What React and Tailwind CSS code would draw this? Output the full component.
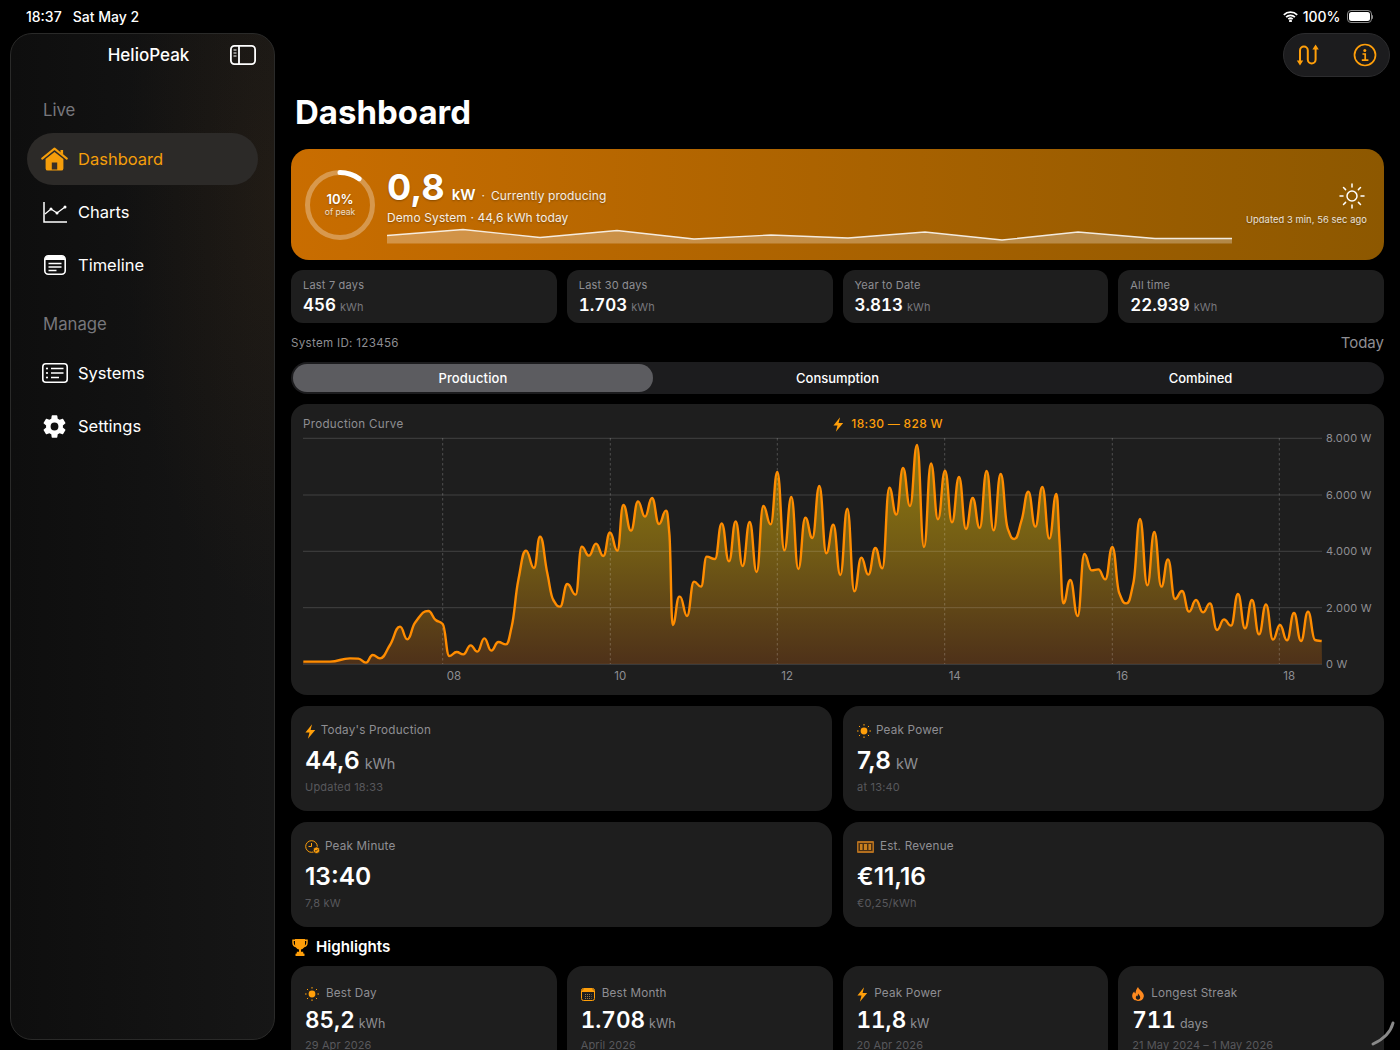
import { IoSettingsSharp } from 'react-icons/io5';

const ORANGE = '#ff9f0a';

// curve samples read off the picture, in 3x crops
const sampleA = [[40,785],[120,785],[180,775],[205,776],[228,788],[248,765],[270,775],[300,735],[330,680],[352,718],[375,668],[415,633],[437,660],[458,672],[478,768],[500,756],[520,763],[542,736],[562,755],[583,715],[604,752],[625,726],[648,733],[665,680],[685,540],[708,452],[732,504],[750,410],[772,520],[790,600],[810,620],[832,552],[857,584],[875,440],[897,467],[918,431],[940,468],[960,397],[982,452],[1000,315],[1023,392],[1044,304],[1065,350],[1086,294],[1107,372],[1128,332],[1138,400],[1148,675],[1168,590]];
const sampleB = [[0,590],[21,648],[42,545],[63,560],[80,470],[105,477],[125,370],[147,484],[167,364],[188,498],[209,366],[230,516],[250,318],[272,373],[292,216],[313,451],[334,291],[355,507],[376,353],[397,414],[418,258],[439,460],[460,374],[481,525],[502,326],[523,574],[544,473],[565,524],[586,444],[607,505],[628,263],[649,344],[669,204],[690,318],[711,135],[732,441],[753,190],[774,358],[795,212],[816,367],[837,231],[858,387],[878,294],[899,384],[920,213],[941,391],[962,222],[983,385],[1003,417],[1025,360],[1045,275],[1066,380],[1087,261],[1108,416],[1129,282],[1139,430],[1150,610],[1171,540]];
const sampleC = [[143,648],[163,462],[185,511],[205,508],[226,538],[247,441],[268,580],[289,610],[310,550],[330,357],[352,556],[373,396],[394,560],[414,478],[435,597],[456,573],[477,635],[498,600],[519,637],[540,610],[561,690],[582,658],[603,677],[624,582],[645,685],[666,600],[687,703],[708,613],[729,719],[750,675],[771,721],[792,639],[813,723],[834,635],[855,720],[875,723]];

const curve = [
  ...sampleA.map(([x, y]) => [290 + x / 3, 400 + y / 3]),
  ...sampleB.map(([x, y]) => [680 + x / 3, 400 + y / 3]),
  ...sampleC.map(([x, y]) => [1030 + x / 3, 400 + y / 3]),
];

// monotone cubic so the peaks stay round and never overshoot
function smoothPath(pts) {
  const n = pts.length;
  const slopes = [];
  for (let i = 0; i < n - 1; i++) slopes.push((pts[i + 1][1] - pts[i][1]) / (pts[i + 1][0] - pts[i][0]));
  const tangents = pts.map((_, i) => {
    if (i === 0) return slopes[0];
    if (i === n - 1) return slopes[n - 2];
    if (slopes[i - 1] * slopes[i] <= 0) return 0;
    return (2 * slopes[i - 1] * slopes[i]) / (slopes[i - 1] + slopes[i]);
  });
  let d = `M${pts[0][0]} ${pts[0][1]}`;
  for (let i = 0; i < n - 1; i++) {
    const h = (pts[i + 1][0] - pts[i][0]) * 0.48;
    d += `C${pts[i][0] + h} ${pts[i][1] + tangents[i] * h} ${pts[i + 1][0] - h} ${pts[i + 1][1] - tangents[i + 1] * h} ${pts[i + 1][0]} ${pts[i + 1][1]}`;
  }
  return d;
}

const linePath = smoothPath(curve);
const areaPath = `${linePath}L1322 664L303 664Z`;

const spark = [[387,235.5],[463,229.5],[540,237.5],[617,230.5],[694,239],[771,235],[848,238],[925,232],[1002,240],[1078,232],[1155,238.5],[1232,238.5]];
const sparkLine = spark.map((p, i) => `${i ? 'L' : 'M'}${p[0]} ${p[1]}`).join('');

function HouseIcon() {
  return (
    <svg width="27" height="24" viewBox="0 0 27 24" fill="none">
      <path d="M19.5 3h2.6v4.6l-2.6-2.2z" fill="#f59e0b" />
      <path d="M1.2 11.6 13.5 1.6l12.3 10" stroke="#f59e0b" strokeWidth="2" strokeLinecap="round" strokeLinejoin="round" />
      <path d="M4.6 12 13.5 4.9l8.9 7.1v9.4a2.2 2.2 0 0 1-2.2 2.2H6.8a2.2 2.2 0 0 1-2.2-2.2z" fill="#f59e0b" />
      <rect x="10.8" y="15.5" width="5.4" height="7" fill="#3a3026" />
    </svg>
  );
}

function ChartIcon() {
  return (
    <svg width="24" height="21" viewBox="0 0 24 21" fill="none">
      <path d="M1 0v20h23" stroke="white" strokeWidth="1.5" />
      <path d="M2 12l6-5 6 4 8-6" stroke="white" strokeWidth="1.3" />
      <circle cx="8" cy="7" r="1.5" fill="white" />
      <circle cx="14" cy="11" r="1.5" fill="white" />
      <circle cx="22" cy="5" r="1.5" fill="white" />
    </svg>
  );
}

function TimelineIcon() {
  return (
    <svg width="22" height="20" viewBox="0 0 22 20" fill="none">
      <rect x="0.8" y="0.8" width="20.4" height="18.4" rx="3.5" stroke="white" strokeWidth="1.6" />
      <path d="M1 4.5a3.5 3.5 0 0 1 3.5-3.5h13a3.5 3.5 0 0 1 3.5 3.5V5H1z" fill="white" />
      <path d="M4.5 8.5h13M4.5 12h13M4.5 15.5h8" stroke="white" strokeWidth="1.3" />
    </svg>
  );
}

function SystemsIcon() {
  return (
    <svg width="26" height="20" viewBox="0 0 26 20" fill="none">
      <rect x="0.8" y="0.8" width="24.4" height="18.4" rx="3" stroke="white" strokeWidth="1.6" />
      <path d="M9 5.5h12.5M9 10h12.5M9 14.5h8" stroke="white" strokeWidth="1.3" />
      <circle cx="5" cy="5.5" r="1.1" fill="white" />
      <circle cx="5" cy="10" r="1.1" fill="white" />
      <circle cx="5" cy="14.5" r="1.1" fill="white" />
    </svg>
  );
}

function SidebarIcon() {
  return (
    <svg width="26" height="20" viewBox="0 0 26 20" fill="none">
      <rect x="0.9" y="0.9" width="24.2" height="18.2" rx="3.5" stroke="white" strokeWidth="1.8" />
      <path d="M9 1v18" stroke="white" strokeWidth="1.8" />
      <path d="M3.5 5h3M3.5 8h3M3.5 11h3" stroke="white" strokeWidth="1.2" />
    </svg>
  );
}

function RouteIcon() {
  return (
    <svg width="24" height="24" viewBox="0 0 24 24" fill="none">
      <path d="M4 19V7.5a3.9 3.9 0 0 1 7.8 0v9a3.9 3.9 0 0 0 7.8 0V5" stroke={ORANGE} strokeWidth="2" />
      <path d="M0.8 17.5h6.4L4 22.5zM16.4 6.5h6.4L19.6 1.5z" fill={ORANGE} />
    </svg>
  );
}

function InfoIcon() {
  return (
    <svg width="24" height="24" viewBox="0 0 24 24" fill="none">
      <circle cx="12" cy="12" r="10.5" stroke={ORANGE} strokeWidth="1.7" />
      <circle cx="11.8" cy="7.5" r="1.5" fill={ORANGE} />
      <path d="M9.5 11h2.7v6.2M8.8 17.2h6.6" stroke={ORANGE} strokeWidth="1.7" />
    </svg>
  );
}

function BoltIcon({ height = 15 }) {
  return (
    <svg width={(height * 10) / 14} height={height} viewBox="2 0 10 14" fill={ORANGE}>
      <path d="M8.6 0.3 2.4 7.9h3.8l-1.5 5.8 6.9-8.1H7.2z" />
    </svg>
  );
}

function SmallSun() {
  return (
    <svg width="14" height="14" viewBox="0 0 14 14" fill={ORANGE} stroke={ORANGE}>
      <circle cx="7" cy="7" r="3.4" stroke="none" />
      <path d="M7 0v1.6M7 12.4V14M0 7h1.6M12.4 7H14M2 2l1.1 1.1M10.9 10.9 12 12M2 12l1.1-1.1M10.9 3.1 12 2" strokeWidth="1" />
    </svg>
  );
}

function HeroSun() {
  return (
    <svg width="26" height="26" viewBox="0 0 26 26" fill="none" stroke="white" strokeWidth="1.5" strokeLinecap="round">
      <circle cx="13" cy="13" r="5" />
      <path d="M13 1v3M13 22v3M1 13h3M22 13h3M4.5 4.5l2.1 2.1M19.4 19.4l2.1 2.1M4.5 21.5l2.1-2.1M19.4 6.6l2.1-2.1" />
    </svg>
  );
}

function ClockBadge() {
  return (
    <svg width="15" height="14" viewBox="0 0 15 14" fill="none">
      <circle cx="6.5" cy="6.5" r="5.8" stroke={ORANGE} strokeWidth="1" />
      <path d="M6.5 3v3.5H3.5" stroke={ORANGE} strokeWidth="1" />
      <circle cx="11.5" cy="10.2" r="3.3" fill={ORANGE} stroke="#1e1e1e" strokeWidth="0.8" />
      <path d="M10 10.3l1.1 1 1.8-2" stroke="#1e1e1e" strokeWidth="0.8" />
    </svg>
  );
}

function BanknoteIcon() {
  return (
    <svg width="18" height="12" viewBox="0 0 18 12">
      <rect width="17" height="12" rx="1" fill="#b36f1f" />
      <rect x="1.5" y="2" width="14" height="8" fill="#4a3014" />
      <rect x="3" y="3" width="2.5" height="6" fill="#c9801f" />
      <rect x="7" y="3" width="3" height="6" fill="#c9801f" />
      <rect x="11.5" y="3" width="2.5" height="6" fill="#c9801f" />
    </svg>
  );
}

function CalendarIcon() {
  return (
    <svg width="14" height="13" viewBox="0 0 14 13" fill="none">
      <rect x="0.5" y="0.5" width="13" height="12" rx="2" stroke={ORANGE} strokeWidth="1" />
      <path d="M1 3a2 2 0 0 1 2-2h8a2 2 0 0 1 2 2v1H1z" fill={ORANGE} />
      <path d="M4 6.5h6.5M4 8.5h6.5M4 10.5h6.5" stroke="#9a7a45" strokeWidth="1" strokeDasharray="1 1" />
    </svg>
  );
}

function FlameIcon() {
  return (
    <svg width="12" height="14" viewBox="0 0 12 14">
      <path d="M6 0c.6 2 3 3.3 4.5 5.5C11.5 7 12 8 11.8 9.4 11.4 12.3 9 14 6 14 3 14 .5 12.2.2 9.3 0 7.3 1 5.5 2.2 4.4c.2 1 .6 1.6 1.3 2C3.6 4 4.5 1.8 6 0z" fill="#ff8a1f" />
      <path d="M6.2 6.5c.4 1.2 2 2.2 2 4 0 1.4-1 2.2-2.2 2.2s-2.2-.8-2.2-2.1c0-1 .7-1.6 1.2-2 .1.5.3.7.6.9 0-1 .2-2.2.6-3z" fill="#1e1e1e" />
    </svg>
  );
}

function TrophyIcon() {
  return (
    <svg width="16" height="17" viewBox="0 0 16 17" fill="none">
      <path d="M3.5 1.2H1v2.3c0 2.4 1.5 3.9 3.8 4.2M12.5 1.2H15v2.3c0 2.4-1.5 3.9-3.8 4.2" stroke={ORANGE} strokeWidth="1.5" />
      <path d="M3 0h10v5.5c0 2.7-1.9 4.6-4 5v2.3h2.2V15H4.8v-2.2H7v-2.3c-2.1-.4-4-2.3-4-5z" fill={ORANGE} />
      <rect x="3.5" y="14.5" width="9" height="2.5" rx="0.5" fill={ORANGE} />
    </svg>
  );
}

function WifiIcon() {
  return (
    <svg width="15" height="11" viewBox="0 0 15 11" fill="none" stroke="white" strokeWidth="1.7">
      <path d="M0.8 3.8a9.6 9.6 0 0 1 13.4 0" />
      <path d="M3.1 6.1a6.3 6.3 0 0 1 8.8 0" />
      <path d="M5.3 8.2a3.2 3.2 0 0 1 4.4 0" />
      <circle cx="7.5" cy="9.9" r="0.6" fill="white" />
    </svg>
  );
}

function NavItem({ icon, label, active }) {
  return (
    <div className={active ? 'h-[52px] rounded-full bg-[#2c2a28] flex items-center pl-[14px]' : 'h-[52px] rounded-full flex items-center pl-[14px]'}>
      <div className="w-[27px] flex justify-center">{icon}</div>
      <span className={active ? 'ml-[10px] text-[16.5px] text-[#f59e0b]' : 'ml-[10px] text-[16.5px] text-white'}>{label}</span>
    </div>
  );
}

function StatCard({ label, value, unit }) {
  return (
    <div className="h-[53px] rounded-[12px] bg-[#1e1e1e] pl-3 pt-[8px]">
      <div className="text-[11px] leading-[14px] tracking-[0.2px] text-[#8e8e93]">{label}</div>
      <div className="mt-[2px] leading-[22px]">
        <span className="text-[17px] font-semibold tabular-nums text-white">{value}</span>
        <span className="ml-1 text-[11px] text-[#77777c]">{unit}</span>
      </div>
    </div>
  );
}

function MetricCard({ icon, label, value, unit, sub }) {
  return (
    <div className="h-[105px] rounded-[16px] bg-[#1e1e1e] pl-[14px] pt-[16px]">
      <div className="flex items-center gap-[4px] h-[18px] text-[11.7px] tracking-[0.2px] text-[#8e8e93]">
        {icon}
        <span className="ml-[1px]">{label}</span>
      </div>
      <div className="mt-[2px] h-[36px] leading-[36px]">
        <span className="text-[24.5px] font-semibold text-white">{value}</span>
        {unit && <span className="ml-[5px] text-[14.5px] text-[#8e8e93]">{unit}</span>}
      </div>
      <div className="mt-[1px] text-[11px] leading-[16px] tracking-[0.2px] text-[#58585c]">{sub}</div>
    </div>
  );
}

function HighlightCard({ icon, label, value, unit, sub }) {
  return (
    <div className="h-[105px] rounded-[16px] bg-[#1e1e1e] pl-[14px] pt-[19px]">
      <div className="flex items-center gap-[7px] h-[18px] text-[11.7px] tracking-[0.2px] text-[#8e8e93]">
        {icon}
        <span>{label}</span>
      </div>
      <div className="mt-[-1px] h-[36px] leading-[36px]">
        <span className="text-[22.5px] font-semibold tabular-nums text-white">{value}</span>
        <span className="ml-[4px] text-[12.5px] text-[#8e8e93]">{unit}</span>
      </div>
      <div className="mt-[-1px] text-[11px] leading-[16px] tracking-[0.1px] text-[#58585c]">{sub}</div>
    </div>
  );
}

function ProductionChart() {
  const yTicks = [[438.3, '8.000 W'], [495, '6.000 W'], [551.3, '4.000 W'], [607.7, '2.000 W'], [664.3, '0 W']];
  const xTicks = [[442.7, '08'], [610.3, '10'], [777.3, '12'], [944.7, '14'], [1112.3, '16'], [1279.3, '18']];
  return (
    <svg width="1093" height="256" viewBox="291 432 1093 256" className="block" fontFamily="Inter, sans-serif">
      <defs>
        <linearGradient id="prodFill" gradientUnits="userSpaceOnUse" x1="0" y1="445" x2="0" y2="664">
          <stop offset="0" stopColor="#8f7a10" />
          <stop offset="0.5" stopColor="#715a15" />
          <stop offset="1" stopColor="#4e3119" />
        </linearGradient>
      </defs>
      <path d={areaPath} fill="url(#prodFill)" />
      {yTicks.map(([y, label]) => (
        <g key={label}>
          <line x1="303" x2="1322" y1={y} y2={y} stroke="white" strokeOpacity="0.16" />
          <text x="1326" y={y + 4} fontSize="11" fill="#8e8e93" letterSpacing="0.2">{label}</text>
        </g>
      ))}
      {xTicks.map(([x, label]) => (
        <g key={label}>
          <line x1={x} x2={x} y1="438" y2="664" stroke="white" strokeOpacity="0.22" strokeDasharray="2.5 2.5" />
          <text x={x + 4} y="679.5" fontSize="11.5" fill="#8e8e93">{label}</text>
        </g>
      ))}
      <path d={linePath} fill="none" stroke="#ff8c00" strokeWidth="2.4" strokeLinejoin="round" />
    </svg>
  );
}

export default function App() {
  return (
    <div className="relative w-[1400px] h-[1050px] overflow-hidden bg-black text-white font-['Inter',sans-serif]">
      {/* Status bar */}
      <div className="h-[33px] pl-[26px] pr-[27px] flex items-center justify-between text-[14px] font-medium">
        <div className="flex gap-[11px]">
          <span>18:37</span>
          <span>Sat May 2</span>
        </div>
        <div className="flex items-center gap-[5px]">
          <WifiIcon />
          <span>100%</span>
          <div className="flex items-center ml-[1px]">
            <div className="w-[25px] h-[13px] rounded-[4px] border border-[#8a8a8a] p-[1px]">
              <div className="w-full h-full rounded-[2.5px] bg-white" />
            </div>
            <div className="w-[1.5px] h-[4px] rounded-r bg-[#8a8a8a]" />
          </div>
        </div>
      </div>

      <div className="flex">
        {/* Sidebar */}
        <aside className="ml-[10px] w-[265px] h-[1007px] shrink-0 rounded-[22px] border border-[#2a2a29] bg-[radial-gradient(ellipse_150px_420px_at_100%_16%,rgba(130,75,15,0.1),transparent),linear-gradient(to_right,#0e0e0e,#161616)] px-[16px]">
          <div className="relative h-[43px] flex items-center justify-center pl-[12px]">
            <span className="text-[17px] font-medium">HelioPeak</span>
            <div className="absolute left-[203px] top-[11px]">
              <SidebarIcon />
            </div>
          </div>
          <div className="mt-[22px] h-[22px] pl-[16px] text-[16.75px] leading-[22px] text-[#77777c]">Live</div>
          <div className="mt-[12px] flex flex-col gap-[1px]">
            <NavItem icon={<HouseIcon />} label="Dashboard" active />
            <NavItem icon={<ChartIcon />} label="Charts" />
            <NavItem icon={<TimelineIcon />} label="Timeline" />
          </div>
          <div className="mt-[22px] h-[22px] pl-[16px] text-[16.75px] leading-[22px] text-[#77777c]">Manage</div>
          <div className="mt-[12px] flex flex-col gap-[1px]">
            <NavItem icon={<SystemsIcon />} label="Systems" />
            <NavItem icon={<IoSettingsSharp size={25} color="white" />} label="Settings" />
          </div>
        </aside>

        {/* Main content */}
        <main className="ml-[16px] w-[1093px] shrink-0">
          <div className="flex justify-end -mr-[6px]">
            <div className="w-[107px] h-[44px] rounded-full bg-[#1c1c1e] border border-[#2c2c2e] flex items-center justify-between pl-[12px] pr-[12px]">
              <RouteIcon />
              <InfoIcon />
            </div>
          </div>
          <h1 className="mt-[14px] pl-[4px] h-[42px] text-[33px] leading-[42px] font-bold">Dashboard</h1>

          {/* Hero */}
          <div className="mt-[16px] h-[111px] rounded-[18px] bg-gradient-to-r from-[#c96d00] to-[#8d5800] flex items-center pl-[13px] pr-[17px] [text-shadow:0_1px_2px_rgba(0,0,0,0.3)]">
            <div className="relative w-[72px] h-[72px] shrink-0">
              <svg width="72" height="72" viewBox="0 0 72 72" fill="none">
                <circle cx="36" cy="36" r="32.5" stroke="white" strokeOpacity="0.3" strokeWidth="5" />
                <path d="M36 3.5A32.5 32.5 0 0 1 55.1 9.7" stroke="white" strokeWidth="5" strokeLinecap="round" />
              </svg>
              <div className="absolute inset-0 flex flex-col items-center justify-center">
                <span className="text-[13px] leading-[15px] font-semibold">10%</span>
                <span className="text-[8.5px] leading-[11px] text-white/80">of peak</span>
              </div>
            </div>
            <div className="ml-[11px] mb-[2px] flex-1 min-w-0 h-[80px] flex flex-col">
              <div className="flex items-baseline h-[46px]">
                <span className="text-[36px] leading-[46px] font-bold">0,8</span>
                <span className="ml-[7px] text-[15px] font-semibold">kW</span>
                <span className="ml-[6px] text-[12px] text-white/85">·</span>
                <span className="ml-[6px] text-[12px] tracking-[0.1px] text-white/90">Currently producing</span>
              </div>
              <div className="text-[12px] leading-[16px] tracking-[0.1px] text-white/90">Demo System · 44,6 kWh today</div>
              <svg width="846" height="16" viewBox="387 228 846 16" className="mt-[2px] block">
                <path d={`${sparkLine}L1232 243.5L387 243.5Z`} fill="white" fillOpacity="0.28" />
                <path d={sparkLine} fill="none" stroke="white" strokeOpacity="0.85" strokeWidth="1.3" />
              </svg>
            </div>
            <div className="ml-[14px] shrink-0 flex flex-col items-end">
              <div className="mr-[2px]">
                <HeroSun />
              </div>
              <div className="mt-[5px] text-[9.3px] leading-[12px] tracking-[0.1px] text-white/85">Updated 3 min, 56 sec ago</div>
            </div>
          </div>

          {/* Totals */}
          <div className="mt-[10px] grid grid-cols-4 gap-[10px]">
            <StatCard label="Last 7 days" value="456" unit="kWh" />
            <StatCard label="Last 30 days" value="1.703" unit="kWh" />
            <StatCard label="Year to Date" value="3.813" unit="kWh" />
            <StatCard label="All time" value="22.939" unit="kWh" />
          </div>

          <div className="mt-[10px] h-[20px] flex items-center justify-between">
            <span className="mt-[1px] text-[11.6px] tracking-[0.3px] text-[#8e8e93]">System ID: 123456</span>
            <span className="text-[15px] text-[#8e8e93]">Today</span>
          </div>

          {/* Segmented control */}
          <div className="mt-[9px] h-[32px] rounded-full bg-[#1c1c1e] p-[2px] grid grid-cols-3 text-[13px] font-medium text-center leading-[28px]">
            <div className="w-[360px] h-[28px] rounded-full bg-[#5c5c60] tracking-[0.15px]">Production</div>
            <div>Consumption</div>
            <div>Combined</div>
          </div>

          {/* Chart */}
          <div className="mt-[10px] h-[291px] rounded-[16px] bg-[#1e1e1e]">
            <div className="h-[28px] pt-[12px] px-[12px] flex justify-between text-[11.6px] leading-[16px] tracking-[0.3px]">
              <span className="text-[#8e8e93]">Production Curve</span>
              <span className="flex items-center gap-[8px] text-[12px] font-medium text-[#ff9f0a]">
                <BoltIcon />
                18:30 — 828 W
              </span>
              <span />
            </div>
            <ProductionChart />
          </div>

          {/* Metrics */}
          <div className="mt-[11px] grid grid-cols-2 gap-[11px]">
            <MetricCard icon={<BoltIcon />} label="Today's Production" value="44,6" unit="kWh" sub="Updated 18:33" />
            <MetricCard icon={<SmallSun />} label="Peak Power" value="7,8" unit="kW" sub="at 13:40" />
            <MetricCard icon={<ClockBadge />} label="Peak Minute" value="13:40" sub="7,8 kW" />
            <MetricCard icon={<BanknoteIcon />} label="Est. Revenue" value="€11,16" sub="€0,25/kWh" />
          </div>

          {/* Highlights */}
          <div className="mt-[9px] h-[22px] flex items-center gap-[8px] pl-[1px]">
            <TrophyIcon />
            <span className="text-[15.2px] font-semibold">Highlights</span>
          </div>
          <div className="mt-[8px] grid grid-cols-4 gap-[10px]">
            <HighlightCard icon={<SmallSun />} label="Best Day" value="85,2" unit="kWh" sub="29 Apr 2026" />
            <HighlightCard icon={<CalendarIcon />} label="Best Month" value="1.708" unit="kWh" sub="April 2026" />
            <HighlightCard icon={<BoltIcon />} label="Peak Power" value="11,8" unit="kW" sub="20 Apr 2026" />
            <HighlightCard icon={<FlameIcon />} label="Longest Streak" value="711" unit="days" sub="21 May 2024 – 1 May 2026" />
          </div>
        </main>
      </div>

      {/* window resize handle */}
      <svg className="absolute left-[1368px] top-[1020px]" width="30" height="28" viewBox="0 0 30 28" fill="none">
        <path d="M25 3c-2 8-9 16-20 21" stroke="#8a8a8a" strokeWidth="3" strokeLinecap="round" />
      </svg>
    </div>
  );
}
